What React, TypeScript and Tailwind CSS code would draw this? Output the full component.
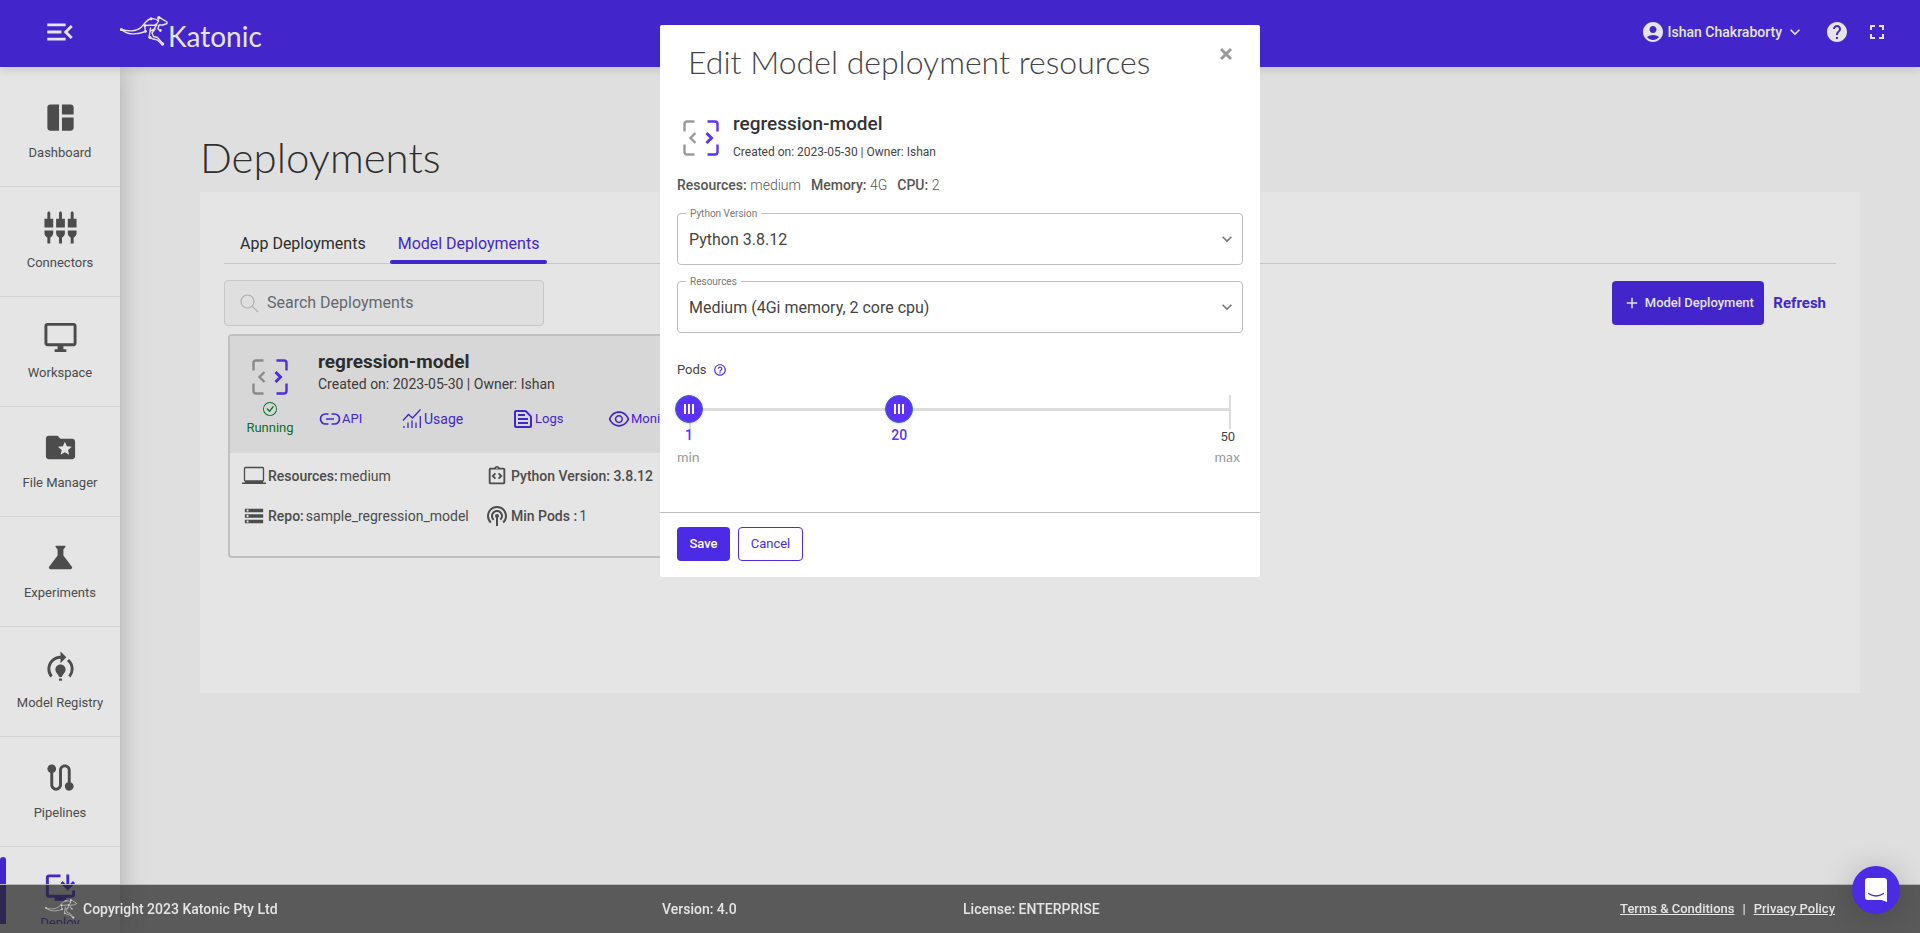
import { useState } from 'react';
import type { ReactNode } from 'react';
import type { IconType } from 'react-icons';
import {
  MdAccountCircle,
  MdAdd,
  MdExpandMore,
  MdFolderSpecial,
  MdFullscreen,
  MdHelp,
  MdHelpOutline,
  MdInstallDesktop,
  MdMenuOpen,
  MdModelTraining,
  MdOutlineDesktopWindows,
  MdOutlineIntegrationInstructions,
  MdOutlineTextSnippet,
  MdPodcasts,
  MdRoute,
  MdScience,
  MdSettingsInputComposite,
  MdSpaceDashboard,
  MdStorage,
} from 'react-icons/md';
import { AiOutlineEye } from 'react-icons/ai';
import { BsCheckCircle } from 'react-icons/bs';

const navItems: { label: string; icon: IconType; active?: boolean }[] = [
  { label: 'Dashboard', icon: MdSpaceDashboard },
  { label: 'Connectors', icon: MdSettingsInputComposite },
  { label: 'Workspace', icon: MdOutlineDesktopWindows },
  { label: 'File Manager', icon: MdFolderSpecial },
  { label: 'Experiments', icon: MdScience },
  { label: 'Model Registry', icon: MdModelTraining },
  { label: 'Pipelines', icon: MdRoute },
  { label: 'Deploy', icon: MdInstallDesktop, active: true },
];

const pythonVersions = ['Python 3.8.12', 'Python 3.9.7', 'Python 3.10.4'];
const resourceOptions = [
  'Small (2Gi memory, 1 core cpu)',
  'Medium (4Gi memory, 2 core cpu)',
  'Large (8Gi memory, 4 core cpu)',
];

const MIN_PODS = 1;
const MAX_PODS = 50;

function Kangaroo({ className }: { className?: string }) {
  return (
    <svg viewBox="0 0 48 30" className={className} fill="none" stroke="currentColor" strokeWidth="1.4" strokeLinecap="round" strokeLinejoin="round">
      <path d="M1.5 13.5C7 19 17 19 25.500 15.500M1.5 13.500c8 2.500 16 1.500 20-2.500C25 7 27 3.500 31 2.800c3-.6 5.500.4 7.500 2.200" />
      <path d="M24.500 9.500 36 9M36 9l2.500-4M25.500 15.500l-1-6M38.500 5 38 1.500l3 .8 6 3.700v1.500l-4 1.500h-4l-1 4 2.300 1.500M36 9l-1.500 4-4 2M35 13l-3 4 1.500 3.500 4 1 5.500 6.500" />
      <path d="m30.500 12-1.500 9.500 4.500 1.500 4 1 4 4" />
      <g fill="currentColor" stroke="none">
        <circle cx="1.500" cy="13.500" r="1.600" />
        <circle cx="24.800" cy="9.500" r="1.500" />
        <circle cx="25.500" cy="15.300" r="1.400" />
        <circle cx="31" cy="2.800" r="1.500" />
        <circle cx="39" cy="1.700" r="1.600" />
        <circle cx="36" cy="9" r="1.500" />
        <circle cx="40.300" cy="14.500" r="1.400" />
        <circle cx="30" cy="21.500" r="1.400" />
        <circle cx="42.500" cy="28" r="1.700" />
      </g>
    </svg>
  );
}

function ModelIcon() {
  return (
    <svg viewBox="0 0 36 36" className="size-9 shrink-0" fill="none" strokeWidth="2.400">
      <g stroke="#9a9a9a">
        <path d="M1.500 11.500V4q0-2.500 2.500-2.500h7.500M1.500 24.500V32q0 2.500 2.500 2.500h7.500" />
        <path d="m12.500 13-5 5 5 5" />
      </g>
      <g stroke="#5a31ff">
        <path d="M24.500 1.500H32q2.500 0 2.500 2.500v7.500M24.500 34.500H32q2.500 0 2.500-2.500v-7.500" />
        <path d="m23.500 13 5 5-5 5" strokeWidth="3" />
      </g>
    </svg>
  );
}

function LinkIcon() {
  return (
    <svg viewBox="0 0 24 24" className="size-6" fill="none" stroke="currentColor" strokeWidth="1.700">
      <path d="M10.500 7H7.500a5 5 0 0 0 0 10h3M13.500 7h3a5 5 0 0 1 0 10h-3M8 12h8" />
    </svg>
  );
}

function UsageIcon() {
  return (
    <svg viewBox="0 0 20 20" className="size-5" fill="none" stroke="currentColor" strokeWidth="1.300">
      <path d="m1 11.500 5.500-6 4 3.500 8-8.500" />
      <path d="M2 17v2M6 13.500V19M10 11.500V19M14 13.500V19M18.300 7v12" />
    </svg>
  );
}

function LaptopIcon() {
  return (
    <svg viewBox="0 0 24 20" className="h-5 w-6" fill="none" stroke="currentColor" strokeWidth="1.300">
      <rect x="2.500" y="1.500" width="19" height="13.500" rx="1" />
      <path d="M0 16.500h24V18H0zM3 15h18v2H3z" fill="currentColor" stroke="none" />
    </svg>
  );
}

function SearchIcon() {
  return (
    <svg viewBox="0 0 20 20" className="size-5" fill="none" stroke="currentColor" strokeWidth="1.200">
      <circle cx="8.500" cy="8.500" r="6.500" />
      <path d="m13 13 6 6" />
    </svg>
  );
}

function Header() {
  return (
    <header className="relative z-20 flex h-[67px] shrink-0 items-center bg-[#4b2be3] pb-1 pr-[31px] text-white shadow-[0_2px_10px_rgba(0,0,0,0.15)]">
      <div className="flex w-[120px] justify-center">
        <button type="button" aria-label="Toggle menu">
          <MdMenuOpen className="size-[34px]" />
        </button>
      </div>
      <a href="#" className="flex items-start pt-1">
        <Kangaroo className="h-[30px] w-12" />
        <span className="pt-1 font-['Lato',sans-serif] text-[28px] leading-8">Katonic</span>
      </a>
      <div className="ml-auto flex items-center">
        <button type="button" className="flex items-center gap-[3px] text-sm font-medium">
          <MdAccountCircle className="size-6" />
          Ishan Chakraborty
          <MdExpandMore className="size-5" />
        </button>
        <button type="button" aria-label="Help" className="ml-5">
          <MdHelp className="size-6" />
        </button>
        <button type="button" aria-label="Full screen" className="ml-4">
          <MdFullscreen className="size-6" />
        </button>
      </div>
    </header>
  );
}

function Sidebar() {
  return (
    <aside className="relative z-10 flex w-[120px] shrink-0 flex-col bg-white pb-[9px] shadow-[0_0_24px_rgba(0,0,0,0.25)]">
      <nav className="flex-1 overflow-hidden pt-[10px]">
        {navItems.map(({ label, icon: Icon, active }) => (
          <a
            key={label}
            href="#"
            className={
              active
                ? 'relative flex h-[110px] flex-col items-center pt-[23px] text-[13px] text-[#4b2be3]'
                : 'relative flex h-[110px] flex-col items-center border-b border-[#ededed] pt-[23px] text-[13px] text-[#555]'
            }
          >
            {active && <span className="absolute bottom-0 left-0 top-[10px] w-[6px] rounded-t bg-[#4b2be3]" />}
            <Icon className="size-[35px]" />
            <span className="mt-2 leading-5">{label}</span>
          </a>
        ))}
      </nav>
    </aside>
  );
}

function CardLink({ icon, children }: { icon: ReactNode; children: ReactNode }) {
  return (
    <a href="#" className="flex items-center text-[13px] text-[#4b2be3]">
      {icon}
      {children}
    </a>
  );
}

function CardFact({ icon, label, value }: { icon: ReactNode; label: string; value?: string }) {
  return (
    <div className="flex items-center gap-[2px] text-[#555]">
      <span className="flex w-6 justify-center">{icon}</span>
      <span className="font-medium">{label}</span>
      {value && <span>{value}</span>}
    </div>
  );
}

function DeploymentCard() {
  return (
    <article className="ml-1 mt-2 h-[224px] w-[520px] rounded border-2 border-[#d6d6d6] text-sm">
      <div className="flex h-[117px] bg-[#f0f0f0]">
        <div className="flex w-20 flex-col items-center pt-[23px] text-[13px] text-[#0e7a2c]">
          <ModelIcon />
          <BsCheckCircle className="mt-[7px] size-[14px]" />
          <span className="mt-[2px] leading-5">Running</span>
        </div>
        <div className="flex-1 pl-2 pt-[14px]">
          <h2 className="text-[19px] font-bold leading-6 text-[#333]">regression-model</h2>
          <p className="leading-5 text-[#444]">Created on: 2023-05-30 | Owner: Ishan</p>
          <div className="mt-[13px] grid grid-cols-[84px_109px_96px_1fr] items-center">
            <CardLink icon={<LinkIcon />}>API</CardLink>
            <CardLink icon={<UsageIcon />}>
              <span className="pl-[2px] text-sm">Usage</span>
            </CardLink>
            <CardLink icon={<MdOutlineTextSnippet className="size-6" />}>Logs</CardLink>
            <CardLink icon={<AiOutlineEye className="size-6" />}>Monitor</CardLink>
          </div>
        </div>
      </div>
      <div className="grid grid-cols-[243px_1fr] gap-y-4 pl-3 pt-[11px] leading-6">
        <CardFact icon={<LaptopIcon />} label="Resources:" value="medium" />
        <CardFact icon={<MdOutlineIntegrationInstructions className="size-[22px]" />} label="Python Version: 3.8.12" />
        <CardFact icon={<MdStorage className="size-[22px]" />} label="Repo:" value="sample_regression_model" />
        <CardFact icon={<MdPodcasts className="size-6" />} label="Min Pods :" value="1" />
      </div>
    </article>
  );
}

function DeploymentsPage() {
  return (
    <main className="min-w-0 flex-1 bg-[#f9f9f9] pl-20 pr-[60px] pt-[65px]">
      <h1 className="font-['Lato',sans-serif] text-[42px] font-light leading-[50px] text-[#333]">Deployments</h1>
      <section className="mt-[10px] h-[501px] bg-white px-6 pt-8">
        <div role="tablist" className="flex h-10 items-stretch border-b border-[#dedede] px-2 text-base">
          <button type="button" role="tab" aria-selected="false" className="mr-4 px-2 text-[#333]">
            App Deployments
          </button>
          <button type="button" role="tab" aria-selected="true" className="relative px-2 text-[#4b2be3]">
            Model Deployments
            <span className="absolute inset-x-0 -bottom-px h-1 rounded bg-[#4b2be3]" />
          </button>
        </div>
        <div className="mt-4 flex items-center justify-between">
          <label className="flex h-[46px] w-80 items-center gap-2 rounded border border-[#dedede] bg-[#f9f9f9] px-[14px] text-[#c4c4c4]">
            <SearchIcon />
            <input
              type="search"
              aria-label="Search Deployments"
              placeholder="Search Deployments"
              className="min-w-0 flex-1 bg-transparent text-base text-[#333] outline-none placeholder:text-[#6c757d]"
            />
          </label>
          <div className="flex items-center gap-[9px] pr-[10px]">
            <button type="button" className="flex h-11 w-[152px] items-center justify-center gap-1 rounded bg-[#4b2be3] text-[13px] font-medium text-white">
              <MdAdd className="size-[18px]" />
              Model Deployment
            </button>
            <button type="button" className="text-[15px] font-bold text-[#4b2be3]">
              Refresh
            </button>
          </div>
        </div>
        <DeploymentCard />
      </section>
    </main>
  );
}

function Footer() {
  return (
    <footer className="fixed inset-x-0 bottom-0 z-30 grid h-[49px] grid-cols-[617fr_301fr_872fr] items-center border-t border-[#cdcdcd] bg-[#2b2b2d]/72 bg-clip-padding pl-[45px] pr-[85px] text-sm font-medium text-white">
      <div className="flex items-center gap-[6px]">
        <Kangaroo className="h-5 w-8 text-white/60" />
        Copyright 2023 Katonic Pty Ltd
      </div>
      <div>Version: 4.0</div>
      <div className="flex items-center justify-between">
        <span>License: ENTERPRISE</span>
        <span className="flex gap-2 text-[13px]">
          <a href="#" className="underline">Terms &amp; Conditions</a>
          <span>|</span>
          <a href="#" className="underline">Privacy Policy</a>
        </span>
      </div>
    </footer>
  );
}

function SelectField({ id, label, options, initial }: { id: string; label: string; options: string[]; initial: string }) {
  const [value, setValue] = useState(initial);

  return (
    <div className="relative h-[52px]">
      <label htmlFor={id} className="absolute -top-[7px] left-[9px] bg-white px-1 text-[10px] leading-4 text-[#777]">
        {label}
      </label>
      <select
        id={id}
        value={value}
        onChange={(e) => setValue(e.target.value)}
        className="h-full w-full appearance-none rounded border border-[#bdbdbd] bg-transparent px-[11px] pt-[2px] text-base text-[#444] outline-none"
      >
        {options.map((option) => (
          <option key={option}>{option}</option>
        ))}
      </select>
      <MdExpandMore className="pointer-events-none absolute right-[6px] top-4 size-5 text-[#777]" />
    </div>
  );
}

function PodsSlider() {
  const [pods, setPods] = useState([1, 20]);

  const update = (index: number, value: number) => {
    setPods((prev) => prev.map((p, i) => (i === index ? value : p)));
  };

  return (
    <div className="mt-[17px] px-3">
      <div className="relative h-[34px]">
        <div className="absolute inset-x-0 top-[13px] h-[3px] bg-[#dcdcdc]" />
        <div className="absolute left-0 top-0 h-full w-[2px] bg-[#dcdcdc]" />
        <div className="absolute right-0 top-0 h-full w-[2px] bg-[#dcdcdc]" />
        {pods.map((value, i) => (
          <div key={i}>
            <input
              type="range"
              aria-label={i === 0 ? 'Minimum pods' : 'Maximum pods'}
              min={MIN_PODS}
              max={MAX_PODS}
              value={value}
              onChange={(e) => update(i, Number(e.target.value))}
              className="absolute inset-x-0 top-0 w-full opacity-0"
            />
            <div
              className="pointer-events-none absolute top-0 flex w-8 -translate-x-1/2 flex-col items-center"
              style={{ left: `${((value - MIN_PODS) / (MAX_PODS - MIN_PODS)) * 100}%` }}
            >
              <span className="flex size-7 items-center justify-center gap-[2px] rounded-full border border-[#3d6f9e] bg-[#5a31ff] shadow-sm">
                <span className="h-[10px] w-[2px] bg-white" />
                <span className="h-[10px] w-[2px] bg-white" />
                <span className="h-[10px] w-[2px] bg-white" />
              </span>
              <span className="mt-[2px] text-sm font-medium leading-5 text-[#5a31ff]">{value}</span>
            </div>
          </div>
        ))}
      </div>
      <div className="-mx-3 flex justify-end pr-2 text-[13px] leading-4 text-[#444]">{MAX_PODS}</div>
      <div className="-mx-3 mt-[2px] flex justify-between pr-[3px] font-['Lato',sans-serif] text-sm leading-5 text-[#999]">
        <span>min</span>
        <span>max</span>
      </div>
    </div>
  );
}

function EditResourcesModal() {
  return (
    <div className="fixed inset-0 z-40 bg-black/10">
      <div role="dialog" aria-modal="true" aria-labelledby="edit-title" className="mx-auto mt-[25px] w-[600px] rounded-[2px] bg-white">
        <div className="flex items-start justify-between pl-7 pr-[26px] pt-[15px]">
          <h2 id="edit-title" className="font-['Lato',sans-serif] text-[32px] font-light leading-[44px] text-[#444]">
            Edit Model deployment resources
          </h2>
          <button type="button" aria-label="Close" className="mt-[6px] text-[#9a9a9a]">
            <svg viewBox="0 0 16 16" className="size-4" stroke="currentColor" strokeWidth="3">
              <path d="m3 3 10 10M13 3 3 13" />
            </svg>
          </button>
        </div>

        <div className="px-[17px] pb-[45px] pt-7">
          <div className="flex items-start pl-[6px]">
            <div className="pt-2">
              <ModelIcon />
            </div>
            <div className="pl-[14px]">
              <h3 className="text-[19px] font-medium leading-6 text-[#333]">regression-model</h3>
              <p className="mt-2 text-xs leading-4 text-[#444]">Created on: 2023-05-30 | Owner: Ishan</p>
            </div>
          </div>
          <p className="mt-[15px] flex gap-[10px] text-sm leading-5 text-[#555]">
            <span><b className="font-medium">Resources:</b> <span className="font-light">medium</span></span>
            <span><b className="font-medium">Memory:</b> <span className="font-light">4G</span></span>
            <span><b className="font-medium">CPU:</b> <span className="font-light">2</span></span>
          </p>

          <div className="mt-[18px] space-y-4">
            <SelectField id="python-version" label="Python Version" options={pythonVersions} initial="Python 3.8.12" />
            <SelectField id="resources" label="Resources" options={resourceOptions} initial="Medium (4Gi memory, 2 core cpu)" />
          </div>

          <div className="mt-[29px] flex items-center gap-[6px] text-[13px] leading-4 text-[#444]">
            Pods
            <MdHelpOutline className="size-[14px] text-[#4b2be3]" />
          </div>
          <PodsSlider />
        </div>

        <div className="flex gap-2 border-t border-[#bdbdbd] px-[17px] pb-4 pt-[14px] text-[13px]">
          <button type="button" className="h-[34px] w-[53px] rounded bg-[#4b2be3] font-medium text-white">
            Save
          </button>
          <button type="button" className="h-[34px] w-[65px] rounded border border-[#4b2be3] text-[#4b2be3]">
            Cancel
          </button>
        </div>
      </div>
    </div>
  );
}

function ChatLauncher() {
  return (
    <button
      type="button"
      aria-label="Open chat"
      className="fixed bottom-[19px] right-5 z-50 flex size-12 items-center justify-center rounded-full bg-[#4b2be3] shadow-[0_2px_32px_rgba(0,0,0,0.2)]"
    >
      <svg viewBox="0 0 22 24" className="h-6 w-[22px]">
        <path d="M3 0h16q3 0 3 3v21l-5.500-2H3q-3 0-3-3V3q0-3 3-3z" fill="#fff" />
        <path d="M3.500 15.500q7.500 5 15 0" fill="none" stroke="#4b2be3" strokeWidth="1.300" strokeLinecap="round" />
      </svg>
    </button>
  );
}

export default function App() {
  return (
    <div className="flex h-screen flex-col overflow-hidden font-['Roboto',sans-serif]">
      <Header />
      <div className="flex min-h-0 flex-1">
        <Sidebar />
        <DeploymentsPage />
      </div>
      <Footer />
      <EditResourcesModal />
      <ChatLauncher />
    </div>
  );
}
